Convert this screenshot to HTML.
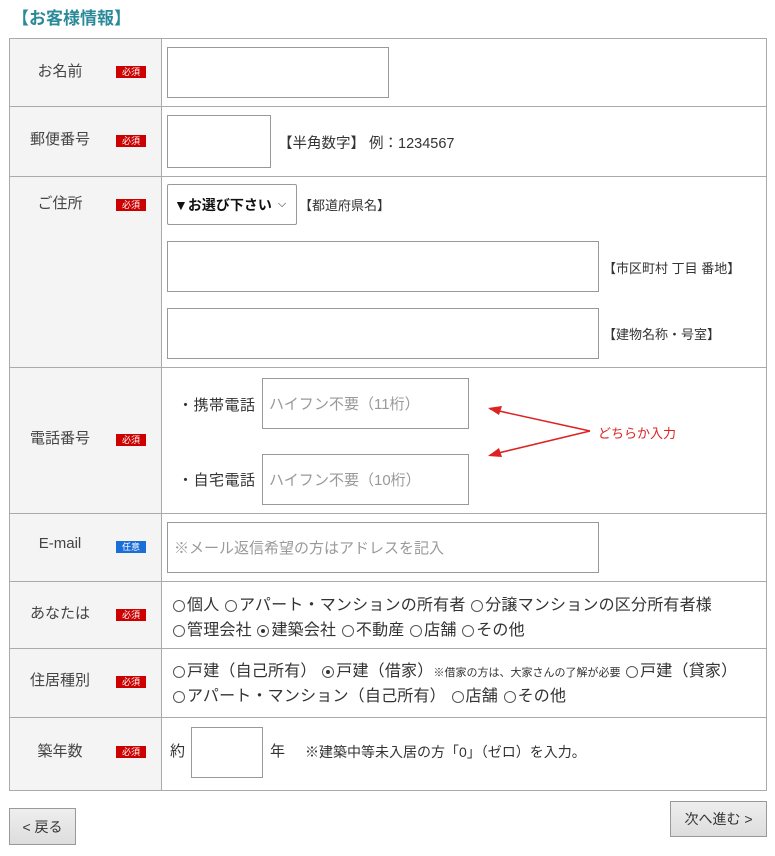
<!DOCTYPE html>
<html><head><meta charset="utf-8"><style>
body{margin:0;width:775px;height:856px;background:#fff;font-family:"Liberation Sans","Noto Sans CJK JP",sans-serif;color:#333;position:relative;overflow:hidden}
.a{position:absolute;white-space:nowrap}
.lab{position:absolute;left:10px;width:151px;background:#f4f4f4}
.ln{position:absolute;background:#aaa}
.box{position:absolute;border:1px solid #999;background:#fff;box-sizing:border-box;font-size:15px;color:#999;padding-left:6px;display:flex;align-items:center}
.bd{position:absolute;left:116px;width:30px;height:12px;background:#c00;color:#fff;font-size:9px;line-height:12px;text-align:center}
.lt{position:absolute;font-size:15px;color:#444;transform:translateX(-50%);left:60px}
.t{font-size:15px;color:#333}
.rt{font-size:16px;color:#333;letter-spacing:0.2px}
.s{font-size:13px;color:#333}
.r{display:inline-block;width:12px;height:12px;border:1px solid #555;border-radius:50%;vertical-align:-2px;margin:0 2px 0 1px;box-sizing:border-box;position:relative}
.r.on::after{content:"";position:absolute;left:3px;top:3px;width:4px;height:4px;border-radius:50%;background:#333}
.btn{position:absolute;background:linear-gradient(#eee,#ddd);border:1px solid #999;box-sizing:border-box;font-size:14px;display:flex;align-items:center;justify-content:center;color:#333}
</style></head><body>
<div class="a" style="left:12px;top:4px;font-size:17px;font-weight:bold;color:#2a8a9a">【お客様情報】</div>

<div class="lab" style="top:38px;height:752px"></div>
<div class="ln" style="left:9px;top:38px;width:758px;height:1px"></div>
<div class="ln" style="left:9px;top:790px;width:758px;height:1px"></div>
<div class="ln" style="left:9px;top:38px;width:1px;height:753px"></div>
<div class="ln" style="left:766px;top:38px;width:1px;height:753px"></div>
<div class="ln" style="left:161px;top:38px;width:1px;height:753px"></div>
<div class="ln" style="left:9px;top:106px;width:758px;height:1px"></div>
<div class="ln" style="left:9px;top:176px;width:758px;height:1px"></div>
<div class="ln" style="left:9px;top:367px;width:758px;height:1px"></div>
<div class="ln" style="left:9px;top:513px;width:758px;height:1px"></div>
<div class="ln" style="left:9px;top:581px;width:758px;height:1px"></div>
<div class="ln" style="left:9px;top:648px;width:758px;height:1px"></div>
<div class="ln" style="left:9px;top:717px;width:758px;height:1px"></div>

<div class="lt" style="top:60px">お名前</div><div class="bd" style="top:66px">必須</div>
<div class="lt" style="top:128px">郵便番号</div><div class="bd" style="top:135px">必須</div>
<div class="lt" style="top:192px">ご住所</div><div class="bd" style="top:199px">必須</div>
<div class="lt" style="top:427px">電話番号</div><div class="bd" style="top:434px">必須</div>
<div class="lt" style="top:535px">E-mail</div><div class="bd" style="top:541px;background:#1a6fd6">任意</div>
<div class="lt" style="top:602px">あなたは</div><div class="bd" style="top:609px">必須</div>
<div class="lt" style="top:669px">住居種別</div><div class="bd" style="top:676px">必須</div>
<div class="lt" style="top:740px">築年数</div><div class="bd" style="top:746px">必須</div>

<div class="box" style="left:167px;top:47px;width:222px;height:51px"></div>
<div class="box" style="left:167px;top:115px;width:104px;height:53px"></div>
<div class="a s" style="left:278px;top:132px;font-size:14.5px">【半角数字】 例：1234567</div>

<div class="box" style="left:167px;top:184px;width:130px;height:41px;color:#111;font-weight:bold;font-size:14px;border-radius:2px">▼お選び下さい <span style="font-weight:normal;font-size:11px;margin-left:6px">⌵</span></div>
<div class="a s" style="left:299px;top:195px">【都道府県名】</div>
<div class="box" style="left:167px;top:241px;width:432px;height:51px"></div>
<div class="a s" style="left:603px;top:258px">【市区町村 丁目 番地】</div>
<div class="box" style="left:167px;top:308px;width:432px;height:51px"></div>
<div class="a s" style="left:603px;top:324px">【建物名称・号室】</div>

<div class="a t" style="left:178px;top:394px;letter-spacing:0.5px">・携帯電話</div>
<div class="box" style="left:262px;top:378px;width:207px;height:51px">ハイフン不要（11桁）</div>
<div class="a t" style="left:178px;top:469px;letter-spacing:0.5px">・自宅電話</div>
<div class="box" style="left:262px;top:454px;width:207px;height:51px">ハイフン不要（10桁）</div>
<svg class="a" style="left:480px;top:400px" width="120" height="64">
<g stroke="#d22" stroke-width="1.5" fill="none"><line x1="110" y1="31" x2="10" y2="9"/><line x1="110" y1="31" x2="10" y2="55"/></g>
<polygon points="8,8 22,6 19,15" fill="#d22"/><polygon points="8,56 19,48 22,57" fill="#d22"/>
</svg>
<div class="a" style="left:598px;top:423px;font-size:13px;color:#d22">どちらか入力</div>

<div class="box" style="left:167px;top:522px;width:432px;height:51px">※メール返信希望の方はアドレスを記入</div>

<div class="a rt" style="left:172px;top:591px"><span class="r"></span>個人 <span class="r"></span>アパート・マンションの所有者 <span class="r"></span>分譲マンションの区分所有者様</div>
<div class="a rt" style="left:172px;top:616px"><span class="r"></span>管理会社 <span class="r on"></span>建築会社 <span class="r"></span>不動産 <span class="r"></span>店舗 <span class="r"></span>その他</div>

<div class="a rt" style="left:172px;top:657px"><span class="r"></span>戸建（自己所有） <span class="r on"></span>戸建（借家）<span style="font-size:11px;letter-spacing:0">※借家の方は、大家さんの了解が必要</span> <span class="r"></span>戸建（貸家）</div>
<div class="a rt" style="left:172px;top:682px"><span class="r"></span>アパート・マンション（自己所有） <span class="r"></span>店舗 <span class="r"></span>その他</div>

<div class="a t" style="left:170px;top:740px">約</div>
<div class="box" style="left:191px;top:727px;width:72px;height:51px"></div>
<div class="a t" style="left:270px;top:740px">年</div>
<div class="a" style="left:305px;top:742px;font-size:14px">※建築中等未入居の方「0」（ゼロ）を入力。</div>

<div class="btn" style="left:9px;top:808px;width:67px;height:37px">&lt; 戻る</div>
<div class="btn" style="left:670px;top:801px;width:97px;height:36px">次へ進む &gt;</div>
</body></html>
